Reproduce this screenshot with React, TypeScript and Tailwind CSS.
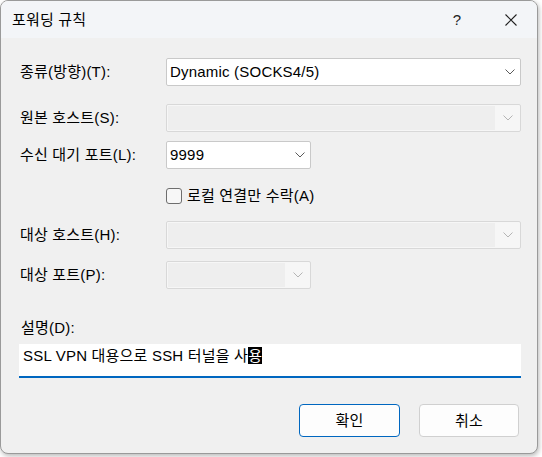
import React from "react";

const font = "font-['Liberation_Sans','Noto_Sans_CJK_KR',sans-serif]";

function Chevron({ disabled }: { disabled?: boolean }) {
  return (
    <svg width="10" height="6" viewBox="0 0 10 6" className="block">
      <path
        d="M0.5 0.5 L5 5 L9.5 0.5"
        fill="none"
        stroke={disabled ? "#b4b4b4" : "#5a5a5a"}
        strokeWidth="1"
      />
    </svg>
  );
}

function Select({ value, width }: { value: string; width: string }) {
  return (
    <div
      className={`${width} h-[28px] bg-white border border-[#c9c9c9] rounded-[2px] flex items-center pl-[3px] pr-[5px]`}
    >
      <span className="flex-1 leading-[20px]">{value}</span>
      <Chevron />
    </div>
  );
}

function DisabledSelect({ width }: { width: string }) {
  return (
    <div className={`${width} h-[28px] bg-[#f6f6f6] border border-[#d8d8d8] rounded-[2px] flex`}>
      <div className="flex-1 m-[1px] bg-[#eeeeee]" />
      <div className="w-[24px] flex items-center justify-center pr-[1px]">
        <Chevron disabled />
      </div>
    </div>
  );
}

function Label({ children }: { children: React.ReactNode }) {
  return <div className="w-[147px] pl-[1px] leading-[20px]">{children}</div>;
}

export default function App() {
  return (
    <div className={`w-[542px] h-[457px] bg-white overflow-hidden ${font} text-[15px] tracking-[0.2px] text-black`}>
      <div className="w-[538px] h-[454px] rounded-[8px] border border-[#9a9a9a] bg-[#f0f0f0] shadow-[1px_2px_5px_rgba(0,0,0,0.28)] overflow-hidden flex flex-col">
        {/* Title bar */}
        <div className="h-[37px] bg-[#f3f5f8] flex items-center pl-[11px] shrink-0">
          <span className="flex-1 leading-[20px]">포워딩 규칙</span>
          <span className="w-[20px] text-center text-[15px] text-[#222] mr-[38px] leading-[20px]">?</span>
          <svg width="12" height="12" viewBox="0 0 12 12" className="mr-[20px]">
            <path d="M0.5 0.5 L11.5 11.5 M11.5 0.5 L0.5 11.5" stroke="#222" strokeWidth="1.1" fill="none" />
          </svg>
        </div>

        {/* Body */}
        <div className="flex flex-col pl-[18px] pr-[16px] pt-[20px]">
          <div className="flex items-center h-[28px]">
            <Label>종류(방향)(T):</Label>
            <Select value="Dynamic (SOCKS4/5)" width="w-[355px]" />
          </div>

          <div className="flex items-center h-[28px] mt-[18px]">
            <Label>원본 호스트(S):</Label>
            <DisabledSelect width="w-[355px]" />
          </div>

          <div className="flex items-center h-[28px] mt-[9px]">
            <Label>수신 대기 포트(L):</Label>
            <Select value="9999" width="w-[145px]" />
          </div>

          <div className="flex items-center h-[16px] mt-[19px] pl-[147px]">
            <div className="w-[16px] h-[16px] rounded-[3px] border border-[#6e6e6e] bg-[#f7f7f7]" />
            <span className="ml-[5px] leading-[20px]">로컬 연결만 수락(A)</span>
          </div>

          <div className="flex items-center h-[28px] mt-[17px]">
            <Label>대상 호스트(H):</Label>
            <DisabledSelect width="w-[355px]" />
          </div>

          <div className="flex items-center h-[28px] mt-[12px]">
            <Label>대상 포트(P):</Label>
            <DisabledSelect width="w-[145px]" />
          </div>

          <div className="mt-[29px] pl-[2px] leading-[20px]">설명(D):</div>

          <div className="mt-[6px] w-[502px] h-[34px] bg-white border-b-2 border-[#0067c0] pl-[4px] pt-[2px] leading-[19px] flex items-start">
            <span className="leading-[19px]">
              SSL VPN 대용으로 SSH 터널을 사<span className="bg-black text-white">용</span>
            </span>
          </div>

          <div className="flex justify-end gap-[19px] mt-[26px] pr-[2px]">
            <button className="w-[101px] h-[33px] bg-[#fdfdfd] border border-[#0067c0] rounded-[4px] flex items-center justify-center leading-[20px]">
              확인
            </button>
            <button className="w-[100px] h-[33px] bg-[#fdfdfd] border border-[#d0d0d0] rounded-[4px] flex items-center justify-center leading-[20px]">
              취소
            </button>
          </div>
        </div>
      </div>
    </div>
  );
}
